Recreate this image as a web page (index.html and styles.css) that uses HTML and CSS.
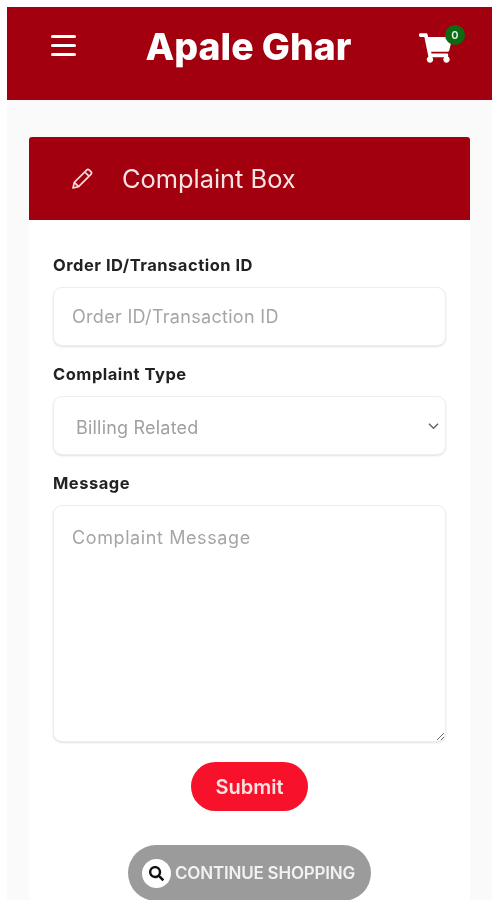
FILE: index.html
```html
<!DOCTYPE html>
<html lang="en">
<head>
    <meta charset="UTF-8">
    <meta name="viewport" content="width=device-width, initial-scale=1.0">
    <title>Complaint Box</title>
    <link rel="stylesheet" href="styles.css">
</head>
<body>
    <div class="page">
        <header class="topbar">
            <div class="burger"><span></span><span></span><span></span></div>
            <div class="brand">Apale Ghar</div>
            <div class="cart">
                <svg class="cartIcon" viewBox="0 0 576 512" width="33" height="30"><path fill="#fff" d="M528.12 301.32l47.27-208C578.8 78.31 567.41 64 552 64H159.21l-9.17-44.81C147.8 8.02 137.96 0 126.55 0H24C10.75 0 0 10.75 0 24v16c0 13.25 10.75 24 24 24h69.88l70.25 343.43C147.32 417.1 136 435.22 136 456c0 30.93 25.07 56 56 56s56-25.07 56-56c0-15.67-6.45-29.83-16.8-40h209.6C430.45 426.17 424 440.33 424 456c0 30.93 25.07 56 56 56s56-25.07 56-56c0-22.17-12.89-41.33-31.58-50.4l5.52-24.28c3.4-15.01-8-29.32-23.4-29.32H218.1l-6.55-32h293.15c11.2 0 20.9-7.75 23.42-18.68z"/></svg>
                <span class="badge">0</span>
            </div>
        </header>
        <main class="wrap">
            <section class="card">
                <div class="cardHead">
                    <svg class="pencil" viewBox="0 0 24 24" width="24" height="24"><path fill="none" stroke="#f7dcdc" stroke-width="1.7" stroke-linejoin="round" d="M3 21l1.3-5.6L16.6 3.1a2 2 0 0 1 2.8 0l1.5 1.5a2 2 0 0 1 0 2.8L8.6 19.7zM4.3 15.4l4.3 4.3M14.8 5l4.2 4.2"/></svg>
                    <h1>Complaint Box</h1>
                </div>
                <form class="form">
                    <label class="lbl" for="orderId">Order ID/Transaction ID</label>
                    <input class="field" id="orderId" type="text" placeholder="Order ID/Transaction ID">
                    <label class="lbl" for="ctype">Complaint Type</label>
                    <div class="selectBox">
                        <select class="field pick" id="ctype">
                            <option>Billing Related</option>
                        </select>
                        <svg class="chev" viewBox="0 0 12 8" width="11" height="8"><path fill="none" stroke="#666" stroke-width="1.6" d="M1 1.5l5 5 5-5"/></svg>
                    </div>
                    <label class="lbl" for="msg">Message</label>
                    <textarea class="field area" id="msg" placeholder="Complaint Message"></textarea>
                    <button class="submit" type="button">Submit</button>
                </form>
                <div class="more">
                    <a class="shop" href="#">
                        <span class="shopIcon">
                            <svg viewBox="0 0 512 512" width="15" height="15"><path fill="#111" d="M505 442.700L405.300 343c-4.500-4.500-10.600-7-17-7H372c27.600-35.300 44-79.700 44-128C416 93.100 322.900 0 208 0S0 93.100 0 208s93.100 208 208 208c48.300 0 92.700-16.400 128-44v16.300c0 6.400 2.500 12.500 7 17l99.700 99.700c9.400 9.400 24.600 9.400 33.900 0l28.300-28.300c9.400-9.400 9.400-24.600.1-34zM208 336c-70.700 0-128-57.200-128-128 0-70.700 57.200-128 128-128 70.700 0 128 57.200 128 128 0 70.700-57.200 128-128 128z"/></svg>
                        </span>
                        <span class="shopText">CONTINUE SHOPPING</span>
                    </a>
                </div>
            </section>
        </main>
    </div>
</body>
</html>
```

FILE: styles.css
```css
*{
    padding: 0;
    margin: 0;
    box-sizing: border-box;
}
html,body{
    height: 900px;
    overflow: hidden;
    background-color: #fff;
}
body{
    padding: 7px 5px 0 7px;
    font-family: "Inter", "Liberation Sans", sans-serif;
}
.page{
    height: 893px;
    overflow: hidden;
    background-color: #fafafa;
    filter: blur(0.4px);/*the reference is a soft, low-res capture*/
}
.topbar{
    position: relative;
    display: flex;
    align-items: flex-start;
    justify-content: space-between;
    height: 93px;
    padding: 0 40px 0 44px;
    background-color: #a2000e;
}
.burger{
    display: flex;
    flex-direction: column;
    gap: 6px;
    width: 25px;
    margin-top: 28px;
}
.burger span{
    height: 3px;
    border-radius: 2px;
    background-color: #fff;
}
.brand{
    margin-top: 18px;
    margin-left: 2px;
    font-size: 37.4px;
    line-height: 44px;
    font-weight: 800;
    color: #fff;
}
.cart{
    position: relative;
    width: 33px;
    margin-top: 26px;
}
.cartIcon{
    display: block;
}
.badge{
    position: absolute;
    top: -8px;
    right: -13px;
    width: 20px;
    height: 20px;
    border-radius: 50%;
    background-color: #0c6b12;
    color: #e8f5e8;
    font-size: 11px;
    font-weight: 600;
    line-height: 20px;
    text-align: center;
}
.wrap{
    padding: 37px 22px 0;
}
.card{
    background-color: #fff;
    border-radius: 3px 3px 0 0;
}
.cardHead{
    display: flex;
    align-items: center;
    height: 83px;
    padding-left: 41px;
    border-radius: 3px 3px 0 0;
    background-color: #a2000e;
}
.cardHead h1{
    margin-left: 28px;
    font-size: 25.4px;
    font-weight: 400;
    color: #f9e4e4;
}
.form{
    display: flex;
    flex-direction: column;
    padding: 34px 24px 0;
}
.lbl{
    height: 23px;
    margin-bottom: 10px;
    font-size: 16.5px;
    line-height: 23px;
    font-weight: 700;
    letter-spacing: 0.5px;
    color: #222;
}
.field{
    display: block;
    width: 100%;
    height: 59px;
    margin-bottom: 17px;
    padding: 0 18px;
    border: 1px solid #eeeeee;
    border-radius: 9px;
    outline: none;
    box-shadow: 0 1px 2px rgba(0,0,0,0.12);
    background-color: #fff;
    font-family: inherit;
    font-size: 18px;
    letter-spacing: 0.3px;
    color: #a0a0a0;
}
.field::placeholder{
    color: #a5a5a5;
}
.selectBox{
    position: relative;
}
.pick{
    appearance: none;
    padding: 4px 0 0 22px;
    letter-spacing: 0.2px;
}
.chev{
    position: absolute;
    top: 26px;
    right: 7px;
}
.area{
    height: 237px;
    margin-bottom: 20px;
    padding-top: 21px;
    letter-spacing: 0.6px;
    resize: both;
}
.submit{
    align-self: center;
    width: 117px;
    height: 49px;
    border: none;
    border-radius: 25px;
    background-color: #f8112a;
    font-family: inherit;
    font-size: 20px;
    font-weight: 600;
    color: #fbe3e3;
}
.more{
    display: flex;
    justify-content: center;
    padding-top: 34px;
}
.shop{
    display: flex;
    align-items: center;
    width: 243px;
    height: 56px;
    padding-left: 14px;
    border-radius: 28px;
    background-color: #9b9b9b;
    text-decoration: none;
}
.shopIcon{
    display: flex;
    align-items: center;
    justify-content: center;
    width: 29px;
    height: 29px;
    border-radius: 50%;
    background-color: #fff;
}
.shopText{
    margin-left: 4px;
    font-size: 17px;
    font-weight: 600;
    letter-spacing: -0.2px;
    color: #f2f2f2;
    white-space: nowrap;
}
```
